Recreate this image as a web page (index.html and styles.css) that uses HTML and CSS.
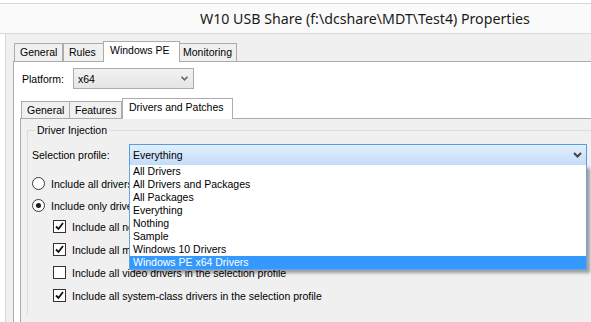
FILE: index.html
```html
<!DOCTYPE html>
<html lang="en">
<head>
    <meta charset="UTF-8">
    <title>W10 USB Share Properties</title>
    <link rel="stylesheet" href="styles.css">
</head>
<body>
<div class="window">
    <div class="titlebar">
        <span class="title">W10 USB Share (f:\dcshare\MDT\Test4) Properties</span>
    </div>

    <div class="client">
        <div class="tab_strip outer_strip">
            <div class="tab tab_general">General</div>
            <div class="tab tab_rules">Rules</div>
            <div class="tab tab_winpe active">Windows PE</div>
            <div class="tab tab_monitoring">Monitoring</div>
        </div>

        <div class="outer_page">
            <div class="platform_row">
                <label class="platform_label" for="platformId">Platform:</label>
                <div id="platformId" class="select_box">
                    <span>x64</span>
                    <svg class="chevron_small" width="7" height="5" viewBox="0 0 7 5">
                        <polyline points="0.5,0.8 3.5,3.8 6.5,0.8" fill="none" stroke="#6a6a6a" stroke-width="1.6"/>
                    </svg>
                </div>
            </div>

            <div class="inner_block">
                <div class="tab_strip inner_strip">
                    <div class="tab itab_general">General</div>
                    <div class="tab itab_features">Features</div>
                    <div class="tab itab_drivers active">Drivers and Patches</div>
                </div>

                <div class="inner_page">
                    <fieldset class="group">
                        <legend>Driver Injection</legend>

                        <div class="profile_row">
                            <label class="profile_label">Selection profile:</label>
                            <div class="combo">
                                <span>Everything</span>
                                <svg class="chevron" width="9" height="6" viewBox="0 0 9 6">
                                    <polyline points="1,1 4.5,4.5 8,1" fill="none" stroke="#444" stroke-width="2"/>
                                </svg>
                                <ul class="dropdown">
                                    <li>All Drivers</li>
                                    <li>All Drivers and Packages</li>
                                    <li>All Packages</li>
                                    <li>Everything</li>
                                    <li>Nothing</li>
                                    <li>Sample</li>
                                    <li>Windows 10 Drivers</li>
                                    <li class="selected">Windows PE x64 Drivers</li>
                                </ul>
                            </div>
                        </div>

                        <div class="option radio_first">
                            <span class="radio"></span>
                            <span>Include all drivers from the selection profile</span>
                        </div>
                        <div class="option radio_second">
                            <span class="radio checked"></span>
                            <span>Include only drivers of the following types:</span>
                        </div>

                        <div class="checks">
                            <div class="option">
                                <span class="checkbox checked"><svg width="11" height="11" viewBox="0 0 11 11"><polyline points="2,5.5 4.5,8 9,2" fill="none" stroke="#111" stroke-width="1.8"/></svg></span>
                                <span>Include all network drivers in the selection profile</span>
                            </div>
                            <div class="option">
                                <span class="checkbox checked"><svg width="11" height="11" viewBox="0 0 11 11"><polyline points="2,5.5 4.5,8 9,2" fill="none" stroke="#111" stroke-width="1.8"/></svg></span>
                                <span>Include all mass storage drivers in the selection profile</span>
                            </div>
                            <div class="option">
                                <span class="checkbox"></span>
                                <span>Include all video drivers in the selection profile</span>
                            </div>
                            <div class="option">
                                <span class="checkbox checked"><svg width="11" height="11" viewBox="0 0 11 11"><polyline points="2,5.5 4.5,8 9,2" fill="none" stroke="#111" stroke-width="1.8"/></svg></span>
                                <span>Include all system-class drivers in the selection profile</span>
                            </div>
                        </div>
                    </fieldset>
                </div>
            </div>
        </div>
    </div>
</div>
</body>
</html>
```

FILE: styles.css
```css
html, body {
    margin: 0;
    padding: 0;
}

body {
    width: 591px;
    height: 322px;
    overflow: hidden;
    background: #ffffff;
    font-family: "Liberation Sans", Arial, sans-serif;
    font-size: 10.5px;
    color: #000;
}

.window {
    padding-top: 3px;
}

.titlebar {
    height: 29px;
    border-top: 1px solid #d6d6d6;
    border-bottom: 1px solid #dadada;
    background: #fafafa;
    display: flex;
    align-items: center;
    padding-left: 200px;
}

.title {
    font-family: "Noto Sans", "Open Sans", sans-serif;
    font-size: 14.2px;
    color: #1a1a1a;
    white-space: nowrap;
}

.client {
    margin-left: 5px;
    border-left: 1px solid #d9d9d9;
    background: #f0f0f0;
    padding-left: 7px;
    padding-top: 7px;
    height: 281px;
}

/* tabs */

.tab_strip {
    display: flex;
    align-items: flex-end;
}

.outer_strip {
    height: 20px;
}

.inner_strip {
    height: 20px;
}

.tab {
    box-sizing: border-box;
    height: 18px;
    border: 1px solid #acacac;
    border-bottom: none;
    background: #f0f0f0;
    padding-left: 5px;
    line-height: 17px;
    white-space: nowrap;
}

.tab.active {
    position: relative;
    z-index: 1;
    height: 21px;
    margin-bottom: -1px;
    background: #ffffff;
    line-height: 17px;
}

.tab_general {
    margin-left: 1px;
    width: 49px;
}

.tab_rules {
    width: 40px;
    border-right: none;
}

.tab_winpe {
    width: 77px;
    padding-left: 6px;
}

.tab_monitoring {
    width: 57px;
    border-left: none;
    padding-left: 3px;
}

.itab_general {
    margin-left: 1px;
    width: 49px;
    height: 17px;
}

.itab_features {
    width: 52px;
    height: 17px;
    border-left: none;
    padding-left: 5px;
}

.itab_drivers {
    width: 111px;
    padding-left: 6px;
}

/* outer page */

.outer_page {
    border-top: 1px solid #acacac;
    border-left: 1px solid #acacac;
    background: #ffffff;
    height: 260px;
}

.platform_row {
    display: flex;
    align-items: center;
    margin-top: 6px;
    padding-left: 8px;
}

.platform_label {
    width: 51px;
}

.select_box {
    box-sizing: border-box;
    width: 121px;
    height: 21px;
    border: 1px solid #acacac;
    background: linear-gradient(#f2f2f2, #e5e5e5);
    display: flex;
    align-items: center;
    justify-content: space-between;
    padding: 0 5px 0 4px;
}

.inner_block {
    margin-top: 9px;
    margin-left: 6px;
}

.inner_page {
    border-top: 1px solid #acacac;
    border-left: 1px solid #acacac;
    background: #f0f0f0;
    height: 203px;
}

/* group box */

.group {
    margin: 5px 0 0 6px;
    padding: 0 0 0 4px;
    border: 1px solid #dcdcdc;
    border-right: none;
    border-bottom: none;
    height: 190px;
}

.group legend {
    margin-left: 3px;
    padding: 0 2px;
    line-height: 13px;
}

.profile_row {
    display: flex;
    align-items: center;
    margin-top: 7px;
}

.profile_label {
    width: 97px;
}

.combo {
    position: relative;
    box-sizing: border-box;
    width: 458px;
    height: 22px;
    border: 1px solid #569de5;
    background: linear-gradient(#e2effc, #c3dcf8);
    display: flex;
    align-items: center;
    justify-content: space-between;
    padding: 0 4px 0 3px;
}

.dropdown {
    position: absolute;
    z-index: 5;
    top: 20px;
    left: -1px;
    right: -1px;
    margin: 0;
    padding: 0;
    list-style: none;
    background: #ffffff;
    border: 1px solid #6aa3e2;
    border-top: none;
    box-shadow: 3px 3px 3px rgba(0, 0, 0, 0.35);
}

.dropdown li {
    height: 13px;
    line-height: 13px;
    padding-left: 3px;
    white-space: nowrap;
}

.dropdown li.selected {
    background: #3399ff;
    color: #ffffff;
}

/* radios and checkboxes */

.option {
    display: flex;
    align-items: center;
    height: 13px;
    white-space: nowrap;
}

.radio_first {
    margin-top: 11px;
}

.radio_second {
    margin-top: 9px;
}

.radio {
    box-sizing: border-box;
    width: 13px;
    height: 13px;
    border: 1px solid #3c3c3c;
    border-radius: 50%;
    background: #ffffff;
    margin-right: 6px;
    display: flex;
    align-items: center;
    justify-content: center;
}

.radio.checked::after {
    content: "";
    width: 5px;
    height: 5px;
    border-radius: 50%;
    background: #1c1c1c;
}

.checks {
    display: flex;
    flex-direction: column;
    gap: 10px;
    margin-top: 8px;
    margin-left: 21px;
}

.checkbox {
    box-sizing: border-box;
    width: 13px;
    height: 13px;
    border: 1px solid #333333;
    background: #ffffff;
    margin-right: 6px;
    display: flex;
    align-items: center;
    justify-content: center;
}
```
